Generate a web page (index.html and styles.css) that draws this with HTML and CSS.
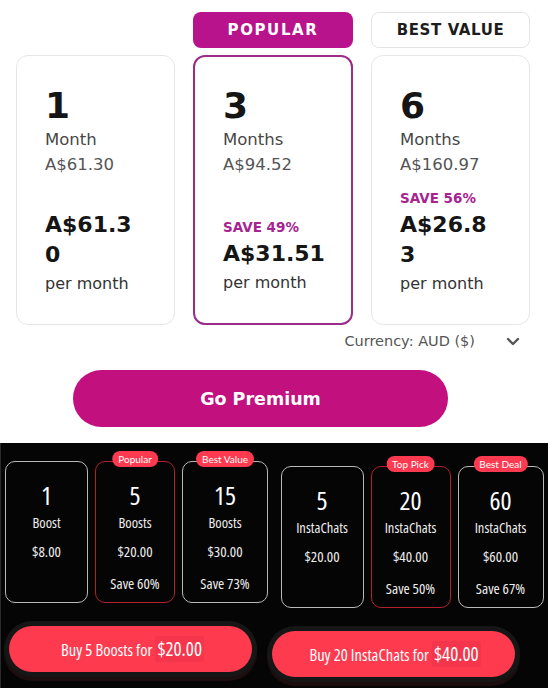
FILE: index.html
```html
<!DOCTYPE html>
<html>
<head>
<meta charset="utf-8">
<link rel="stylesheet" href="styles.css">
</head>
<body>
<div class="premium">
  <div class="badges">
    <div></div>
    <div class="badge badge-popular">POPULAR</div>
    <div class="badge badge-best">BEST VALUE</div>
  </div>
  <div class="plans">
    <div class="plan">
      <div class="plan-num">1</div>
      <div class="plan-unit">Month</div>
      <div class="plan-total">A$61.30</div>
      <div class="plan-bottom">
        <div class="plan-price">A$61.3<br>0</div>
        <div class="plan-per">per month</div>
      </div>
    </div>
    <div class="plan plan-selected">
      <div class="plan-num">3</div>
      <div class="plan-unit">Months</div>
      <div class="plan-total">A$94.52</div>
      <div class="plan-bottom">
        <div class="plan-save">SAVE 49%</div>
        <div class="plan-price">A$31.51</div>
        <div class="plan-per">per month</div>
      </div>
    </div>
    <div class="plan">
      <div class="plan-num">6</div>
      <div class="plan-unit">Months</div>
      <div class="plan-total">A$160.97</div>
      <div class="plan-bottom">
        <div class="plan-save">SAVE 56%</div>
        <div class="plan-price">A$26.8<br>3</div>
        <div class="plan-per">per month</div>
      </div>
    </div>
  </div>
  <div class="currency">
    <span>Currency: AUD ($)</span>
    <svg class="chev" width="14" height="9" viewBox="0 0 14 9"><path d="M2 2 L7 7 L12 2" fill="none" stroke="#555" stroke-width="2.4" stroke-linecap="round" stroke-linejoin="round"/></svg>
  </div>
  <button class="go-premium">Go Premium</button>
</div>

<div class="dark">
  <div class="panel panel-left">
    <div class="packs">
      <div class="pack">
        <div class="pack-num">1</div>
        <div class="pack-unit">Boost</div>
        <div class="pack-price">$8.00</div>
      </div>
      <div class="pack pack-selected">
        <span class="pill">Popular</span>
        <div class="pack-num">5</div>
        <div class="pack-unit">Boosts</div>
        <div class="pack-price">$20.00</div>
        <div class="pack-save">Save 60%</div>
      </div>
      <div class="pack">
        <span class="pill">Best Value</span>
        <div class="pack-num">15</div>
        <div class="pack-unit">Boosts</div>
        <div class="pack-price">$30.00</div>
        <div class="pack-save">Save 73%</div>
      </div>
    </div>
    <button class="buy buy-left">Buy 5 Boosts for <span class="buy-amt">$20.00</span></button>
  </div>
  <div class="panel panel-right">
    <div class="packs">
      <div class="pack">
        <div class="pack-num">5</div>
        <div class="pack-unit">InstaChats</div>
        <div class="pack-price">$20.00</div>
      </div>
      <div class="pack pack-selected">
        <span class="pill">Top Pick</span>
        <div class="pack-num">20</div>
        <div class="pack-unit">InstaChats</div>
        <div class="pack-price">$40.00</div>
        <div class="pack-save">Save 50%</div>
      </div>
      <div class="pack">
        <span class="pill">Best Deal</span>
        <div class="pack-num">60</div>
        <div class="pack-unit">InstaChats</div>
        <div class="pack-price">$60.00</div>
        <div class="pack-save">Save 67%</div>
      </div>
    </div>
    <button class="buy buy-right">Buy 20 InstaChats for <span class="buy-amt">$40.00</span></button>
  </div>
</div>
</body>
</html>
```

FILE: styles.css
```css
* { box-sizing: border-box; }
html, body { margin: 0; padding: 0; }
body {
  width: 548px;
  height: 688px;
  overflow: hidden;
  background: #fff;
  font-family: "DejaVu Sans", "Liberation Sans", sans-serif;
}

.premium {
  height: 443px;
  padding: 12px 18px 0 16px;
  background: #fff;
}

.badges {
  display: grid;
  grid-template-columns: 159px 160px 159px;
  column-gap: 18px;
  height: 36px;
}
.badge {
  border-radius: 8px;
  display: flex;
  align-items: center;
  justify-content: center;
  font-weight: bold;
  font-size: 15px;
  letter-spacing: 1.6px;
}
.badge-popular {
  background: #b8128d;
  color: #fff;
}
.badge-best {
  background: #fff;
  color: #1d1d1d;
  border: 1.5px solid #e4e4e4;
  letter-spacing: 0.6px;
}

.plans {
  margin-top: 7px;
  display: grid;
  grid-template-columns: 159px 160px 159px;
  column-gap: 18px;
  height: 269px;
}
.plan {
  border: 1.5px solid #e6e6e6;
  border-radius: 12px;
  padding: 32px 0 29px 28px;
  display: flex;
  flex-direction: column;
}
.plan-selected {
  border: 2px solid #9b2c88;
  height: 270px;
  padding-top: 31px;
}
.plan-num {
  font-size: 36px;
  line-height: 36px;
  font-weight: bold;
  color: #151515;
}
.plan-unit {
  margin-top: 3px;
  font-size: 16.5px;
  line-height: 25px;
  color: #474747;
}
.plan-total {
  font-size: 16.5px;
  line-height: 25px;
  color: #555;
}
.plan-bottom {
  margin-top: auto;
}
.plan-save {
  font-size: 13.5px;
  line-height: 18px;
  font-weight: bold;
  color: #a8238f;
  margin-bottom: 3px;
}
.plan-price {
  font-size: 22px;
  line-height: 30px;
  font-weight: bold;
  color: #151515;
}
.plan-per {
  margin-top: 3px;
  font-size: 16px;
  line-height: 22px;
  color: #333;
}

.currency {
  margin-top: 7px;
  display: flex;
  justify-content: flex-end;
  align-items: center;
  gap: 31px;
  padding-right: 10px;
  font-size: 14.5px;
  line-height: 20px;
  color: #555;
}
.chev { display: block; }

.go-premium {
  display: block;
  margin: 19px 0 0 57px;
  width: 375px;
  height: 57px;
  border: none;
  border-radius: 29px;
  background: #c3107f;
  color: #fff;
  font-family: "DejaVu Sans", sans-serif;
  font-weight: bold;
  font-size: 17.5px;
}

.dark {
  height: 245px;
  background: #050505;
  display: flex;
  border-left: 1px solid #2a2a2a;
  font-family: "Open Sans", "Liberation Sans", sans-serif;
  font-stretch: 80%;
  color: #fff;
}
.panel {
  width: 274px;
  display: flex;
  flex-direction: column;
}
.panel-left { padding: 18px 0 0 4px; }
.panel-right { padding: 23px 0 0 6px; }

.packs {
  display: grid;
  grid-template-columns: 83px 80px 86px;
  column-gap: 7px;
}
.pack {
  position: relative;
  height: 142px;
  border: 1.5px solid #b9b9b9;
  border-radius: 10px;
  padding-top: 17px;
  text-align: center;
}
.pack-selected { border-color: #b0202f; }
.pill {
  position: absolute;
  top: -11px;
  left: 50%;
  transform: translateX(-50%);
  height: 16px;
  padding: 0 6px;
  border-radius: 8px;
  background: #fe3a50;
  color: #fff;
  font-family: "Lato", sans-serif;
  font-stretch: normal;
  font-size: 10px;
  line-height: 16px;
  white-space: nowrap;
}
.pack-num {
  font-size: 26px;
  line-height: 32px;
  font-weight: 400;
}
.pack-unit {
  margin-top: 3px;
  font-size: 14.5px;
  line-height: 17px;
  color: #eee;
}
.pack-price {
  margin-top: 12px;
  font-size: 15px;
  line-height: 17px;
  color: #eee;
}
.pack-save {
  margin-top: 15px;
  font-size: 15px;
  line-height: 17px;
  color: #eee;
}

.buy {
  height: 46px;
  width: 243px;
  border: none;
  border-radius: 23px;
  background: #fe3a4f;
  color: #fff;
  box-shadow: 0 0 0 5px #161616, 0 4px 0 5px #1c0d0f;
  font-family: "Open Sans", "Liberation Sans", sans-serif;
  font-stretch: 80%;
  font-size: 16.5px;
  display: flex;
  align-items: center;
  justify-content: center;
  gap: 3px;
  padding-left: 10px;
}
.buy-amt {
  font-size: 19px;
  background: #f5354b;
  border-radius: 3px;
  padding: 0 2px;
}
.buy-left { margin: 23px 0 0 4px; }
.buy-right { margin: 23px 0 0 -9px; }
```
